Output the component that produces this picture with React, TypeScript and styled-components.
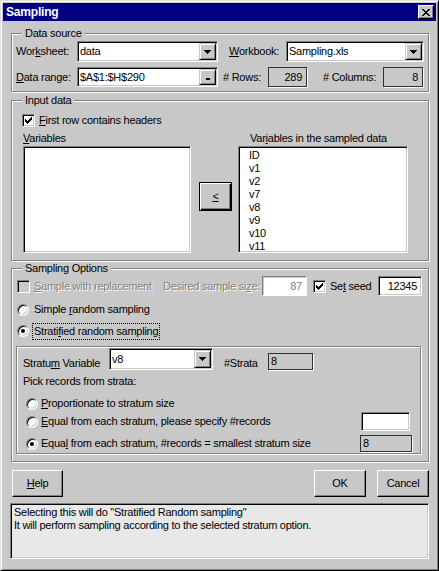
import React from 'react';
import styled, { createGlobalStyle, css } from 'styled-components';

const FACE = '#c8c8c8';
const SHADOW = '#808080';
const DARK = '#000';
const LIGHT = '#fff';

const GlobalStyle = createGlobalStyle`
  html, body {
    margin: 0;
    padding: 0;
    background: ${FACE};
  }
  body {
    font-family: "Liberation Sans", Arial, sans-serif;
    font-size: 11px;
    color: #000;
  }
  * {
    box-sizing: border-box;
  }
`;

// classic 3D edges
const sunken = css`
  border: 1px solid;
  border-color: ${SHADOW} ${LIGHT} ${LIGHT} ${SHADOW};
  box-shadow: inset 1px 1px 0 ${DARK}, inset -1px -1px 0 ${FACE};
`;

const raised = css`
  border: 1px solid;
  border-color: ${FACE} ${DARK} ${DARK} ${FACE};
  box-shadow: inset 1px 1px 0 ${LIGHT}, inset -1px -1px 0 ${SHADOW};
`;

const disabledText = css`
  color: ${SHADOW};
  text-shadow: 1px 1px 0 ${LIGHT};
`;

const Window = styled.div`
  width: 439px;
  height: 571px;
  background: ${FACE};
  border: 1px solid;
  border-color: #dfdfdf ${DARK} ${DARK} #dfdfdf;
  box-shadow: inset 1px 1px 0 ${LIGHT}, inset -1px -1px 0 ${SHADOW};
  padding: 2px;
  display: flex;
  flex-direction: column;
  letter-spacing: -0.25px;
`;

const TitleBar = styled.div`
  flex: none;
  height: 18px;
  background: #000080;
  display: flex;
  align-items: center;
  justify-content: space-between;
  padding: 0 2px 0 3px;
`;

const TitleText = styled.span`
  color: #fff;
  font-weight: bold;
  font-size: 12px;
  letter-spacing: -0.2px;
`;

const CloseButton = styled.div`
  width: 16px;
  height: 14px;
  background: ${FACE};
  border: 1px solid;
  border-color: ${LIGHT} ${DARK} ${DARK} ${LIGHT};
  box-shadow: inset -1px -1px 0 ${SHADOW};
  display: flex;
  align-items: center;
  justify-content: center;
`;

const Body = styled.div`
  display: flex;
  flex-direction: column;
  padding: 0 7px 0 8px;
`;

const GroupBox = styled.div<{ $h: number; $mt: number; $ml?: number; $w?: number; $pt?: number; $pl?: number }>`
  position: relative;
  flex: none;
  height: ${p => p.$h}px;
  ${p => p.$w && `width: ${p.$w}px;`}
  margin-top: ${p => p.$mt}px;
  margin-left: ${p => p.$ml ?? 0}px;
  padding-top: ${p => p.$pt ?? 0}px;
  padding-left: ${p => p.$pl ?? 0}px;
  border: 1px solid ${SHADOW};
  box-shadow: inset 1px 1px 0 ${LIGHT}, 1px 1px 0 ${LIGHT};
`;

const Legend = styled.span`
  position: absolute;
  top: -7px;
  left: 10px;
  padding: 0 3px;
  background: ${FACE};
  line-height: 13px;
`;

const Row = styled.div<{ $h?: number; $mt?: number; $pl?: number; $align?: string }>`
  display: flex;
  align-items: ${p => p.$align ?? 'center'};
  height: ${p => p.$h ?? 13}px;
  margin-top: ${p => p.$mt ?? 0}px;
  padding-left: ${p => p.$pl ?? 0}px;
`;

const Cell = styled.span<{ $w?: number; $ml?: number; $disabled?: boolean }>`
  flex: none;
  ${p => p.$w && `width: ${p.$w}px;`}
  margin-left: ${p => p.$ml ?? 0}px;
  white-space: nowrap;
  line-height: 13px;
  ${p => p.$disabled && disabledText}
`;

const U = styled.span`
  text-decoration: underline;
  text-underline-offset: 1px;
`;

const Combo = styled.div<{ $w: number; $h?: number }>`
  ${sunken};
  flex: none;
  width: ${p => p.$w}px;
  height: ${p => p.$h ?? 21}px;
  background: #fff;
  display: flex;
  align-items: center;
  padding: 1px;
`;

const ComboText = styled.span`
  flex: 1;
  padding-left: 1px;
  line-height: 13px;
  white-space: nowrap;
`;

const DropButton = styled.span<{ $bottom?: boolean }>`
  ${raised};
  flex: none;
  width: 17px;
  height: 100%;
  background: ${FACE};
  display: flex;
  justify-content: center;
  align-items: ${p => (p.$bottom ? 'flex-end' : 'center')};
  padding-bottom: ${p => (p.$bottom ? 4 : 0)}px;
`;

const Edit = styled.div<{ $w: number; $h: number; $right?: boolean; $disabled?: boolean }>`
  ${sunken};
  flex: none;
  width: ${p => p.$w}px;
  height: ${p => p.$h}px;
  background: #fff;
  line-height: 13px;
  padding: 0 4px;
  display: flex;
  align-items: center;
  justify-content: ${p => (p.$right ? 'flex-end' : 'flex-start')};
  ${p =>
    p.$disabled &&
    css`
      color: ${SHADOW};
      border-color: ${SHADOW} ${LIGHT} ${LIGHT} ${SHADOW};
      box-shadow: inset 1px 1px 0 ${FACE};
    `}
`;

const ValueBox = styled.div<{ $w: number; $h: number; $right?: boolean }>`
  flex: none;
  width: ${p => p.$w}px;
  height: ${p => p.$h}px;
  border: 1px solid #303030;
  box-shadow: 1px 1px 0 ${LIGHT};
  background: ${FACE};
  line-height: 13px;
  padding: 0 ${p => (p.$right ? 4 : 2)}px;
  display: flex;
  align-items: center;
  justify-content: ${p => (p.$right ? 'flex-end' : 'flex-start')};
`;

const CheckBox = styled.span<{ $disabled?: boolean }>`
  ${sunken};
  flex: none;
  width: 13px;
  height: 13px;
  background: ${p => (p.$disabled ? FACE : '#fff')};
  display: flex;
  align-items: center;
  justify-content: center;
`;

const Radio = styled.span<{ $checked?: boolean }>`
  flex: none;
  width: 12px;
  height: 12px;
  border-radius: 50%;
  background: #fff;
  border: 1px solid;
  border-color: ${SHADOW} ${LIGHT} ${LIGHT} ${SHADOW};
  box-shadow: inset 1px 1px 0 ${DARK}, inset -1px -1px 0 ${FACE};
  display: flex;
  align-items: center;
  justify-content: center;

  &::after {
    content: '';
    display: ${p => (p.$checked ? 'block' : 'none')};
    width: 4px;
    height: 4px;
    border-radius: 50%;
    background: #000;
  }
`;

const FocusLabel = styled.span<{ $ml?: number }>`
  margin-left: ${p => p.$ml ?? 0}px;
  border: 1px dotted #000;
  padding: 1px 1px;
  line-height: 13px;
  white-space: nowrap;
`;

const ListGrid = styled.div`
  display: grid;
  grid-template-columns: 168px 47px 170px;
  grid-template-rows: 13px 107px;
  row-gap: 1px;
  margin-top: 5px;
  padding-left: 11px;
`;

const ListBox = styled.div`
  ${sunken};
  background: #fff;
  padding: 2px 0 0 10px;
`;

const ListItem = styled.div`
  height: 13px;
  line-height: 13px;
`;

const PushButton = styled.div<{ $w: number; $h: number; $ml?: number; $mt?: number; $default?: boolean }>`
  flex: none;
  align-self: flex-start;
  width: ${p => p.$w}px;
  height: ${p => p.$h}px;
  margin-left: ${p => p.$ml ?? 0}px;
  margin-top: ${p => p.$mt ?? 0}px;
  background: ${FACE};
  border: 1px solid;
  border-color: ${LIGHT} ${DARK} ${DARK} ${LIGHT};
  box-shadow: inset -1px -1px 0 ${SHADOW};
  display: flex;
  align-items: center;
  justify-content: center;
  line-height: 13px;
  ${p =>
    p.$default &&
    css`
      border-color: ${DARK};
      box-shadow: inset 1px 1px 0 ${LIGHT}, inset -1px -1px 0 ${DARK}, inset -2px -2px 0 ${SHADOW};
    `}
`;

const ButtonRow = styled.div`
  flex: none;
  display: flex;
  height: 27px;
  margin-top: 8px;
`;

const Spacer = styled.span`
  flex: 1;
`;

const StatusBox = styled.div`
  ${sunken};
  flex: none;
  height: 56px;
  margin-top: 6px;
  margin-left: -1px;
  background: #e8e8e8;
  padding: 2px 0 0 3px;
  line-height: 13px;
`;

const Arrow = () => (
  <svg width="7" height="4" viewBox="0 0 7 4" shapeRendering="crispEdges">
    <path d="M0 0h7v1h-1v1h-1v1h-1v1h-1v-1h-1v-1h-1v-1h-1z" fill="#000" />
  </svg>
);

const RefBar = () => (
  <svg width="4" height="2" viewBox="0 0 4 2" shapeRendering="crispEdges">
    <rect width="4" height="2" fill="#000" />
  </svg>
);

const CloseGlyph = () => (
  <svg width="8" height="7" viewBox="0 0 8 7" shapeRendering="crispEdges">
    <path
      d="M0 0h2v1h-2zM6 0h2v1h-2zM1 1h2v1h-2zM5 1h2v1h-2zM2 2h4v1h-4zM3 3h2v1h-2zM2 4h4v1h-4zM1 5h2v1h-2zM5 5h2v1h-2zM0 6h2v1h-2zM6 6h2v1h-2z"
      fill="#000"
    />
  </svg>
);

const Check = ({ color = '#000' }: { color?: string }) => (
  <svg width="7" height="7" viewBox="0 0 7 7" shapeRendering="crispEdges">
    <path
      d="M6 0h1v1h-1zM5 1h2v1h-2zM0 2h1v1h-1zM4 2h3v1h-3zM0 3h2v1h-2zM3 3h3v1h-3zM0 4h5v1h-5zM1 5h3v1h-3zM2 6h1v1h-1z"
      fill={color}
    />
  </svg>
);

const Dropdown = ({ w, h, value }: { w: number; h?: number; value: string }) => (
  <Combo $w={w} $h={h}>
    <ComboText>{value}</ComboText>
    <DropButton>
      <Arrow />
    </DropButton>
  </Combo>
);

const sampledVars = ['ID', 'v1', 'v2', 'v7', 'v8', 'v9', 'v10', 'v11'];

export default function App() {
  return (
    <>
      <GlobalStyle />
      <Window>
        <TitleBar>
          <TitleText>Sampling</TitleText>
          <CloseButton>
            <CloseGlyph />
          </CloseButton>
        </TitleBar>

        <Body>
          {/* Data source */}
          <GroupBox $h={59} $mt={12} $pt={7} $pl={4}>
            <Legend>Data source</Legend>
            <Row $h={21}>
              <Cell $w={61}>
                Wor<U>k</U>sheet:
              </Cell>
              <Dropdown w={141} value="data" />
              <Cell $w={57} $ml={11}>
                <U>W</U>orkbook:
              </Cell>
              <Dropdown w={138} value="Sampling.xls" />
            </Row>
            <Row $h={20} $mt={5}>
              <Cell $w={61}>
                <U>D</U>ata range:
              </Cell>
              <Combo $w={141} $h={20}>
                <ComboText>$A$1:$H$290</ComboText>
                <DropButton $bottom>
                  <RefBar />
                </DropButton>
              </Combo>
              <Cell $w={45} $ml={5}>
                # Rows:
              </Cell>
              <ValueBox $w={39} $h={20} $right>
                289
              </ValueBox>
              <Cell $w={60} $ml={16}>
                # Columns:
              </Cell>
              <ValueBox $w={40} $h={20} $right>
                8
              </ValueBox>
            </Row>
          </GroupBox>

          {/* Input data */}
          <GroupBox $h={161} $mt={8}>
            <Legend>Input data</Legend>
            <Row $h={13} $mt={13} $pl={10}>
              <CheckBox>
                <Check />
              </CheckBox>
              <Cell $ml={4}>
                <U>F</U>irst row contains headers
              </Cell>
            </Row>
            <ListGrid>
              <Cell>
                <U>V</U>ariables
              </Cell>
              <span />
              <Cell $ml={12}>
                Var<U>i</U>ables in the sampled data
              </Cell>
              <ListBox />
              <PushButton $w={33} $h={29} $ml={8} $mt={36} $default>
                <U>&lt;</U>
              </PushButton>
              <ListBox>
                {sampledVars.map(v => (
                  <ListItem key={v}>{v}</ListItem>
                ))}
              </ListBox>
            </ListGrid>
          </GroupBox>

          {/* Sampling options */}
          <GroupBox $h={194} $mt={7}>
            <Legend>Sampling Options</Legend>
            <Row $h={20} $mt={7} $pl={5}>
              <CheckBox $disabled />
              <Cell $w={129} $ml={4} $disabled>
                <U>S</U>ample with replacement
              </Cell>
              <Cell $w={99} $disabled>
                Desired sample si<U>z</U>e:
              </Cell>
              <Edit $w={45} $h={20} $right $disabled>
                87
              </Edit>
              <CheckBox style={{ marginLeft: 6 }}>
                <Check />
              </CheckBox>
              <Cell $w={48} $ml={4}>
                Se<U>t</U> seed
              </Cell>
              <Edit $w={44} $h={20} $right>
                12345
              </Edit>
            </Row>
            <Row $h={13} $mt={7} $pl={5}>
              <Radio />
              <Cell $ml={5}>
                Simple <U>r</U>andom sampling
              </Cell>
            </Row>
            <Row $h={18} $mt={6} $pl={5}>
              <Radio $checked />
              <FocusLabel $ml={3}>
                Strati<U>f</U>ied random sampling
              </FocusLabel>
            </Row>

            <GroupBox $h={108} $mt={6} $ml={4} $w={405}>
              <Row $h={22} $mt={1} $pl={6} $align="flex-end">
                <Cell $w={86}>
                  Stratu<U>m</U> Variable
                </Cell>
                <Dropdown w={104} h={22} value="v8" />
                <Cell $w={44} $ml={11}>
                  #Strata
                </Cell>
                <ValueBox $w={45} $h={17}>
                  8
                </ValueBox>
              </Row>
              <Row $h={13} $mt={5} $pl={6}>
                <Cell>Pick records from strata:</Cell>
              </Row>
              <Row $h={13} $mt={9} $pl={9}>
                <Radio />
                <Cell $ml={3}>
                  <U>P</U>roportionate to stratum size
                </Cell>
              </Row>
              <Row $h={19} $mt={2} $pl={9}>
                <Radio />
                <Cell $w={320} $ml={3}>
                  <U>E</U>qual from each stratum, please specify #records
                </Cell>
                <Edit $w={49} $h={19} />
              </Row>
              <Row $h={17} $mt={4} $pl={9}>
                <Radio $checked />
                <Cell $w={319} $ml={3}>
                  Equa<U>l</U> from each stratum, #records = smallest stratum size
                </Cell>
                <ValueBox $w={52} $h={17}>
                  8
                </ValueBox>
              </Row>
            </GroupBox>
          </GroupBox>

          <ButtonRow>
            <PushButton $w={51} $h={27} $ml={1}>
              <U>H</U>elp
            </PushButton>
            <Spacer />
            <PushButton $w={52} $h={27}>
              OK
            </PushButton>
            <PushButton $w={52} $h={27} $ml={11}>
              Cancel
            </PushButton>
          </ButtonRow>

          <StatusBox>
            <div>Selecting this will do "Stratified Random sampling"</div>
            <div>It will perform sampling according to the selected stratum option.</div>
          </StatusBox>
        </Body>
      </Window>
    </>
  );
}
